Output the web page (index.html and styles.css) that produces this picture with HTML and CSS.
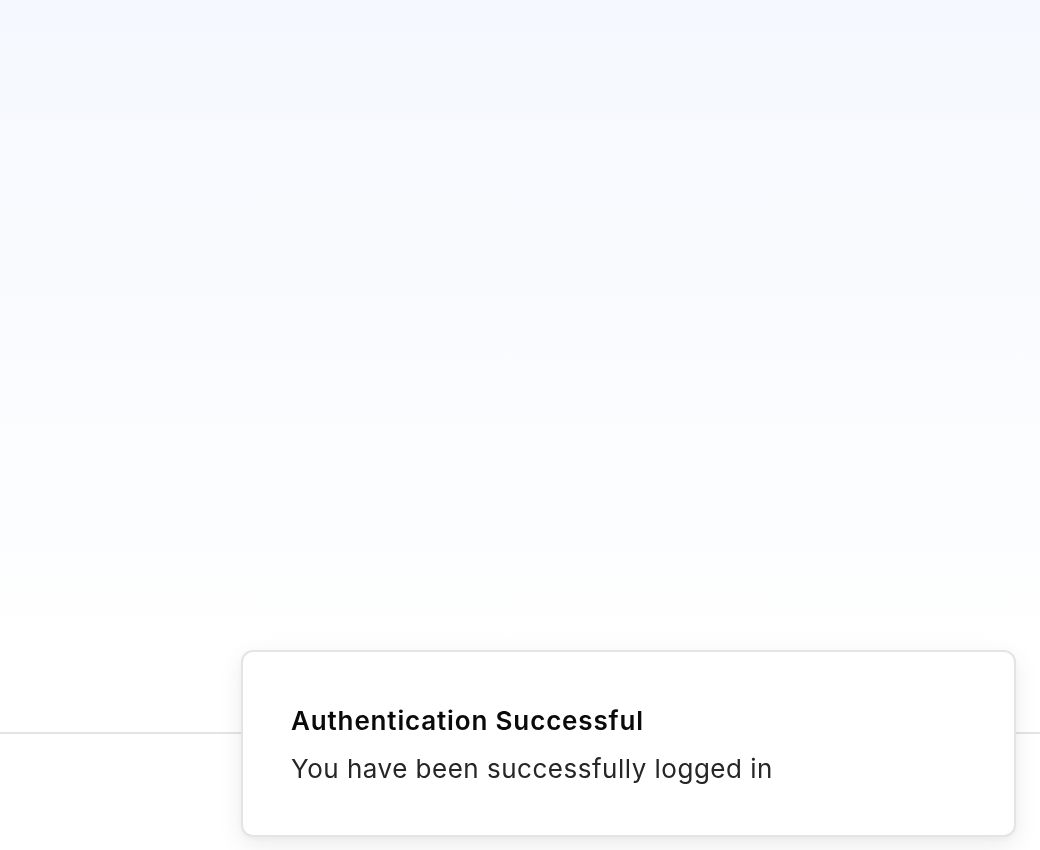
FILE: index.html
```html
<!DOCTYPE html>
<html lang="en">
<head>
<meta charset="utf-8">
<title>Authentication</title>
<link rel="stylesheet" href="styles.css">
</head>
<body>
  <main class="hero"></main>
  <footer class="footer"></footer>
  <div class="toast" role="status">
    <div class="toast-title">Authentication Successful</div>
    <div class="toast-desc">You have been successfully logged in</div>
  </div>
</body>
</html>
```

FILE: styles.css
```css
html, body {
  margin: 0;
  padding: 0;
  height: 100%;
}
body {
  font-family: Inter, "Open Sans", "Liberation Sans", sans-serif;
  background: #ffffff;
  overflow: hidden;
}
.hero {
  box-sizing: border-box;
  height: 734px;
  background: linear-gradient(180deg, #f5f8fe 0%, #f9fbfe 45%, #ffffff 92%);
  border-bottom: 2px solid #e4e4e7;
}
.footer {
  height: 116px;
  background: #ffffff;
}
.toast {
  position: fixed;
  right: 24px;
  bottom: 13px;
  width: 775px;
  box-sizing: border-box;
  padding: 53px 48px 50px;
  background: #ffffff;
  border: 2px solid #e4e4e7;
  border-radius: 12px;
  box-shadow: 0 8px 24px rgba(0, 0, 0, 0.08), 0 2px 6px rgba(0, 0, 0, 0.04);
  display: flex;
  flex-direction: column;
  gap: 16px;
}
.toast-title {
  font-size: 26px;
  line-height: 32px;
  font-weight: 600;
  letter-spacing: 0.85px;
  color: #0a0a0a;
}
.toast-desc {
  font-size: 26px;
  line-height: 32px;
  font-weight: 400;
  letter-spacing: 0.5px;
  color: #262626;
}
```
